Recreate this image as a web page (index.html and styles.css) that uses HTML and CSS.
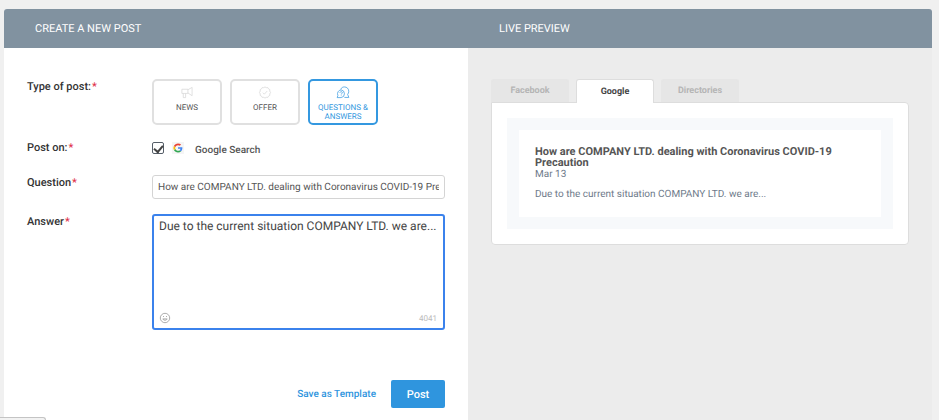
FILE: index.html
```html
<!DOCTYPE html>
<html lang="en">
<head>
    <meta charset="UTF-8">
    <meta name="viewport" content="width=device-width, initial-scale=1.0">
    <title>Create a New Post</title>
    <link rel="stylesheet" href="styles.css">
</head>
<body>
    <main class="panel">
        <section class="column editor">
            <h2 class="column-title">CREATE A NEW POST</h2>
            <form class="post-form" id="postForm">
                <div class="row row-type">
                    <span class="label required" id="typeLabel">Type of post:</span>
                    <div class="types" role="group" aria-labelledby="typeLabel">
                        <button type="button" class="type">
                            <svg class="type-icon" viewBox="0 0 14 14">
                                <path d="M1.500 3.500H8v4.500H1.500zM8 4l4.500-2.500v9L8 7.500M3 8v4.500h2.500V8"/>
                            </svg>
                            NEWS
                        </button>
                        <button type="button" class="type">
                            <svg class="type-icon" viewBox="0 0 14 14">
                                <path d="M7 1l1.400.8 1.600-.1.8 1.400 1.400.8-.1 1.600L13 7l-.9 1.500.1 1.600-1.400.8-.8 1.400-1.600-.1L7 13l-1.400-.8-1.600.1-.8-1.400-1.400-.8.1-1.600L1 7l.9-1.500-.1-1.600 1.400-.8L4 1.700l1.600.1z"/>
                                <path d="M4.700 7.200l1.600 1.600 3-3.300"/>
                            </svg>
                            OFFER
                        </button>
                        <button type="button" class="type active" aria-pressed="true">
                            <svg class="type-icon" viewBox="0 0 14 14">
                                <path d="M4.500 3.600C5.300 1.800 6.800 1 8.500 1c2.700 0 4.700 2 4.700 4.700 0 1.300-.4 2.400-1.200 3.300l1.300 3.300H8.500"/>
                                <path d="M5 4.200a4.200 4.200 0 0 1 0 8.300H.7l.8-2.300A4.200 4.200 0 0 1 5 4.200z"/>
                                <path d="M3.700 7.300c.1-1.700 2.800-1.500 2.600 0-.1.900-1.200.8-1.200 1.900M5.100 10.200v.7"/>
                            </svg>
                            QUESTIONS &amp; ANSWERS
                        </button>
                    </div>
                </div>

                <div class="row row-post-on">
                    <span class="label required">Post on:</span>
                    <div class="networks">
                        <input type="checkbox" class="check" id="googleSearch" name="network" checked>
                        <span class="google">
                            <svg viewBox="0 0 48 48">
                                <path fill="#4285f4" d="M45 24.500c0-1.600-.1-2.700-.4-4H24v7.600h12c-.2 2-1.500 5-4.400 7l6.800 5.200C42.500 36.600 45 31 45 24.500z"/>
                                <path fill="#34a853" d="M24 46c5.900 0 10.900-1.900 14.500-5.300l-6.900-5.300c-1.800 1.300-4.300 2.200-7.600 2.200-5.800 0-10.700-3.800-12.500-9.100l-7.200 5.500C7.900 41.100 15.400 46 24 46z"/>
                                <path fill="#fbbc05" d="M11.500 28.500c-.5-1.400-.7-2.900-.7-4.500s.3-3.100.7-4.500L4.300 14C2.800 17 2 20.400 2 24s.8 7 2.300 10z"/>
                                <path fill="#ea4335" d="M24 10.400c4.100 0 6.900 1.800 8.500 3.300l6.200-6C34.900 4.100 29.900 2 24 2 15.400 2 7.900 6.900 4.300 14l7.200 5.500c1.800-5.300 6.700-9.100 12.500-9.100z"/>
                            </svg>
                        </span>
                        <label class="network-name" for="googleSearch">Google Search</label>
                    </div>
                </div>

                <div class="row row-question">
                    <label class="label required" for="question">Question</label>
                    <input type="text" class="field question" id="question" name="question" value="How are COMPANY LTD. dealing with Coronavirus COVID-19 Precaution">
                </div>

                <div class="row">
                    <label class="label required" for="answer">Answer</label>
                    <div class="answer-box">
                        <textarea class="field answer" id="answer" name="answer">Due to the current situation COMPANY LTD. we are...</textarea>
                        <button type="button" class="emoji" aria-label="Insert emoji">
                            <svg viewBox="0 0 12 12">
                                <circle cx="6" cy="6" r="4.700"/>
                                <path d="M4.500 4v1M7.500 4v1M3.800 6.900h4.400c-.6 1.800-3.800 1.800-4.400 0z"/>
                            </svg>
                        </button>
                        <span class="counter">4041</span>
                    </div>
                </div>

                <div class="actions">
                    <a class="save-link" href="#">Save as Template</a>
                    <button type="submit" class="post-btn">Post</button>
                </div>
            </form>
        </section>

        <section class="column preview">
            <h2 class="column-title">LIVE PREVIEW</h2>
            <div class="preview-body">
                <div class="tabs" role="tablist">
                    <button type="button" class="tab" role="tab">Facebook</button>
                    <button type="button" class="tab active" role="tab" aria-selected="true">Google</button>
                    <button type="button" class="tab" role="tab">Directories</button>
                </div>
                <div class="tab-content">
                    <div class="card-wrap">
                        <article class="card">
                            <h3 class="card-title">How are COMPANY LTD. dealing with Coronavirus COVID-19 Precaution</h3>
                            <p class="card-date">Mar 13</p>
                            <p class="card-text">Due to the current situation COMPANY LTD. we are...</p>
                        </article>
                    </div>
                </div>
            </div>
        </section>
    </main>
    <div class="status-bar"></div>
</body>
</html>
```

FILE: styles.css
```css
* {
    box-sizing: border-box;
}
body {
    margin: 0;
    padding: 9px 7px 0 4px;
    height: 100vh;
    overflow: hidden;
    display: flex;
    background: #f0f0f0;
    color: #333;
    font-family: Roboto, "Liberation Sans", sans-serif;
    font-size: 10px;
    text-rendering: geometricPrecision;
}
h2, h3, p {
    margin: 0;
}
button, input, textarea {
    font-family: inherit;
    text-rendering: inherit;
}
button {
    cursor: pointer;
}
.panel {
    flex: 1;
    display: grid;
    grid-template-columns: 1fr 1fr;
    border-radius: 3px 3px 0 0;
    overflow: hidden;
}
.column {
    min-width: 0;
}
.editor {
    background: #fff;
}
.preview {
    background: #ececec;
}
.column-title {
    padding: 0 31px;
    background: #8192a0;
    color: #fff;
    font-size: 11px;
    font-weight: 400;
    line-height: 39px;
}

/* form */
.post-form {
    padding: 31px 23px 12px;
}
.row {
    display: grid;
    grid-template-columns: 125px 1fr;
    align-items: start;
}
.row-type {
    margin-bottom: 15px;
}
.row-post-on {
    margin-bottom: 19px;
}
.row-question {
    margin-bottom: 15px;
}
.label {
    font-size: 11px;
    font-weight: 500;
    line-height: 15px;
}
.required:after {
    content: "*";
    color: #e0314b;
    margin-left: 1px;
}
.types {
    display: flex;
    gap: 8px;
}
.type {
    width: 70px;
    height: 46px;
    padding: 5px 4px 0;
    display: flex;
    flex-direction: column;
    align-items: center;
    gap: 4px;
    background: #fff;
    border: 2px solid #e0e0e0;
    border-radius: 5px;
    color: #555;
    font-size: 8px;
    line-height: 9px;
}
.type-icon {
    width: 14px;
    height: 13px;
    flex: none;
    fill: none;
    stroke: #d6d6d6;
    stroke-width: 0.8;
}
.type.active {
    border-color: #3498e0;
    color: #3498e0;
}
.type.active .type-icon {
    stroke: #3498e0;
}
.networks {
    display: flex;
    align-items: center;
    height: 16px;
}
.check {
    appearance: none;
    width: 12px;
    height: 12px;
    margin: 0;
    border: 1px solid #555e68;
    border-radius: 2px;
    background: #fff;
    display: grid;
    place-items: center;
}
.check:checked::before {
    content: "";
    width: 7px;
    height: 4px;
    border-left: 2px solid #444;
    border-bottom: 2px solid #444;
    transform: rotate(-50deg);
}
.google {
    width: 12px;
    height: 12px;
    margin: 0 11px 0 8px;
    padding: 1px;
    background: #f5f5f5;
    display: flex;
}
.network-name {
    padding-top: 4px;
    color: #555;
    font-weight: 500;
}
.field {
    width: 100%;
    border: 1px solid #d4d4d4;
    border-radius: 3px;
    background: #fff;
    color: #555;
}
.question {
    height: 24px;
    padding: 0 5px;
    font-size: 10px;
}
.answer-box {
    position: relative;
}
.answer {
    display: block;
    height: 116px;
    padding: 2px 5px;
    border: 2px solid #3b82ec;
    color: #444;
    font-size: 12px;
    line-height: 16px;
    outline: none;
    resize: none;
}
.emoji {
    position: absolute;
    left: 7px;
    bottom: 6px;
    width: 12px;
    height: 12px;
    padding: 0;
    border: 0;
    background: none;
}
.emoji svg {
    display: block;
    fill: none;
    stroke: #999;
    stroke-width: 0.8;
}
.counter {
    position: absolute;
    right: 8px;
    bottom: 6px;
    color: #bbb;
    font-size: 8px;
    line-height: 10px;
}
.actions {
    display: flex;
    justify-content: flex-end;
    align-items: center;
    gap: 15px;
    margin-top: 50px;
}
.save-link {
    color: #2f95de;
    font-weight: 500;
    text-decoration: none;
}
.post-btn {
    width: 54px;
    height: 28px;
    padding: 0;
    border: 0;
    border-radius: 2px;
    background: #2f95de;
    color: #fff;
    font-size: 11px;
    font-weight: 500;
}

/* preview */
.preview-body {
    padding: 31px 23px;
}
.tabs {
    display: flex;
    gap: 7px;
}
.tab {
    width: 78px;
    height: 23px;
    padding: 0;
    border: 1px solid #e6e6e6;
    border-bottom: 0;
    border-radius: 3px 3px 0 0;
    background: #e6e6e6;
    color: #b5b5b5;
    font-size: 9px;
    font-weight: 700;
}
.tab.active {
    /* covers the top border of the content box */
    height: 24px;
    margin-bottom: -1px;
    z-index: 1;
    background: #fff;
    border-color: #ddd;
    color: #444;
}
.tab-content {
    padding: 15px;
    background: #fff;
    border: 1px solid #ddd;
    border-radius: 0 4px 4px 4px;
}
.card-wrap {
    padding: 12px;
    background: #f7f9fb;
}
.card {
    padding: 16px;
    background: #fff;
}
.card-title {
    color: #555;
    font-size: 11px;
    font-weight: 700;
    line-height: 11px;
}
.card-date {
    color: #6e7a8a;
    font-size: 10px;
    line-height: 14px;
}
.card-text {
    margin-top: 7px;
    color: #6e7a8a;
    font-size: 10px;
    line-height: 12px;
}
.status-bar {
    position: fixed;
    left: 0;
    bottom: 0;
    width: 46px;
    height: 3px;
    background: #f2f2f2;
    border: 1px solid #c4c4c4;
    border-width: 1px 1px 0 0;
    border-radius: 0 3px 0 0;
}
```
